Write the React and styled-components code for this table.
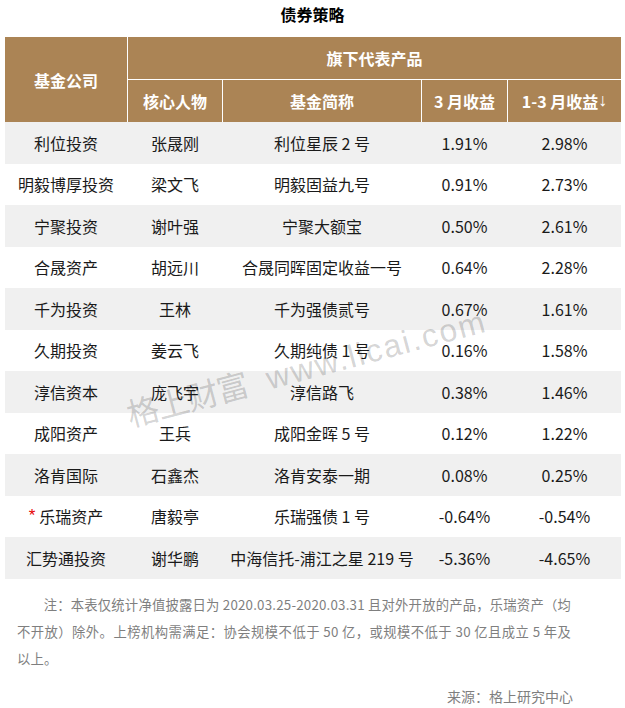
import React from "react";
import styled, { createGlobalStyle } from "styled-components";

const rows = [
  { company: "利位投资", person: "张晟刚", fund: "利位星辰 2 号", m3: "1.91%", q1: "2.98%" },
  { company: "明毅博厚投资", person: "梁文飞", fund: "明毅固益九号", m3: "0.91%", q1: "2.73%" },
  { company: "宁聚投资", person: "谢叶强", fund: "宁聚大额宝", m3: "0.50%", q1: "2.61%" },
  { company: "合晟资产", person: "胡远川", fund: "合晟同晖固定收益一号", m3: "0.64%", q1: "2.28%" },
  { company: "千为投资", person: "王林", fund: "千为强债贰号", m3: "0.67%", q1: "1.61%" },
  { company: "久期投资", person: "姜云飞", fund: "久期纯债 1 号", m3: "0.16%", q1: "1.58%" },
  { company: "淳信资本", person: "庞飞宇", fund: "淳信路飞", m3: "0.38%", q1: "1.46%" },
  { company: "成阳资产", person: "王兵", fund: "成阳金晖 5 号", m3: "0.12%", q1: "1.22%" },
  { company: "洛肯国际", person: "石鑫杰", fund: "洛肯安泰一期", m3: "0.08%", q1: "0.25%" },
  { company: "乐瑞资产", person: "唐毅亭", fund: "乐瑞强债 1 号", m3: "-0.64%", q1: "-0.54%", starred: true },
  { company: "汇势通投资", person: "谢华鹏", fund: "中海信托-浦江之星 219 号", m3: "-5.36%", q1: "-4.65%" },
];

const GlobalStyle = createGlobalStyle`
  body {
    margin: 0;
    background: #fff;
    font-family: "Noto Sans CJK SC", "Noto Sans", sans-serif;
  }
`;

const COLS = "122px 94px 198px 85px 113px";

const Page = styled.div`
  width: 625px;
  padding-bottom: 4px;
`;

const Title = styled.h3`
  margin: 0;
  height: 37px;
  line-height: 28px;
  text-align: center;
  font-size: 16px;
  font-weight: 700;
  color: #000;
`;

const TableWrap = styled.div`
  position: relative;
  margin: 0 4px 0 5px;
  width: 616px;
`;

const Head = styled.div`
  display: grid;
  grid-template-columns: ${COLS};
  grid-template-rows: 42px 42px;
  gap: 1px;
  background: #fff;
`;

const HeadCell = styled.div`
  background: #ab8455;
  color: #fff;
  font-size: 16px;
  font-weight: 700;
  display: flex;
  align-items: center;
  justify-content: center;
  grid-row: ${(p) => p.$rowSpan || "auto"};
  grid-column: ${(p) => p.$colSpan || "auto"};
`;

const SortArrow = styled.span`
  font-family: "Liberation Sans", "DejaVu Sans", sans-serif;
  font-weight: 400;
  font-size: 18px;
  line-height: 1;
  position: relative;
  top: -1px;
`;

const Row = styled.div`
  display: grid;
  grid-template-columns: ${COLS};
  column-gap: 1px;
  height: 41.5px;
  background: ${(p) => (p.$shaded ? "#f0f0f0" : "#fff")};
`;

const Cell = styled.div`
  display: flex;
  align-items: center;
  justify-content: center;
  font-size: 16px;
  color: #1a1a1a;
  white-space: nowrap;
`;

const Star = styled.span`
  color: #e60000;
  font-family: "Liberation Sans", sans-serif;
  font-size: 17px;
  margin-right: 4px;
  position: relative;
  top: 0;
`;

const Watermark = styled.div`
  position: absolute;
  left: 126px;
  top: 360px;
  height: 32px;
  line-height: 32px;
  transform: rotate(-15deg);
  transform-origin: left bottom;
  font-size: 32px;
  font-weight: 400;
  color: rgba(0, 0, 0, 0.18);
  white-space: nowrap;
  pointer-events: none;
`;

const WatermarkBrand = styled.span`
  letter-spacing: -1px;
  margin-right: 20px;
`;

const WatermarkUrl = styled.span`
  font-family: "Liberation Sans", sans-serif;
  letter-spacing: 2px;
`;

const Note = styled.p`
  margin: 12px 0 0 17px;
  width: 554px;
  font-size: 13.33px;
  letter-spacing: 0.2px;
  line-height: 27px;
  text-indent: 2em;
  text-align: justify;
  color: #7f7f7f;
`;

const Source = styled.p`
  margin: 12px 0 0;
  width: 573px;
  text-align: right;
  font-size: 14px;
  line-height: 24px;
  color: #7f7f7f;
`;

export default function App() {
  return (
    <Page>
      <GlobalStyle />
      <Title>债券策略</Title>
      <TableWrap>
        <Head>
          <HeadCell $rowSpan="1 / span 2">基金公司</HeadCell>
          <HeadCell $colSpan="2 / span 4">旗下代表产品</HeadCell>
          <HeadCell>核心人物</HeadCell>
          <HeadCell>基金简称</HeadCell>
          <HeadCell>3 月收益</HeadCell>
          <HeadCell>
            1-3 月收益<SortArrow>↓</SortArrow>
          </HeadCell>
        </Head>
        {rows.map((r, i) => (
          <Row key={r.company} $shaded={i % 2 === 0}>
            <Cell>
              {r.starred && <Star>*</Star>}
              {r.company}
            </Cell>
            <Cell>{r.person}</Cell>
            <Cell>{r.fund}</Cell>
            <Cell>{r.m3}</Cell>
            <Cell>{r.q1}</Cell>
          </Row>
        ))}
        <Watermark>
          <WatermarkBrand>格上财富</WatermarkBrand>
          <WatermarkUrl>www.licai.com</WatermarkUrl>
        </Watermark>
      </TableWrap>
      <Note>
        注：本表仅统计净值披露日为 2020.03.25-2020.03.31 且对外开放的产品，乐瑞资产（均不开放）除外。上榜机构需满足：协会规模不低于 50 亿，或规模不低于 30 亿且成立 5 年及以上。
      </Note>
      <Source>来源：格上研究中心</Source>
    </Page>
  );
}
